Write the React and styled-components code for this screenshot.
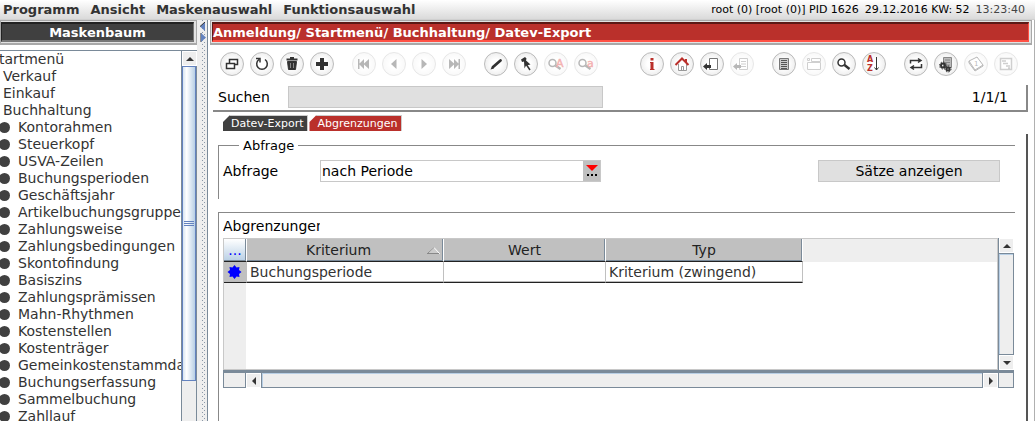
import React from 'react'
import styled, { createGlobalStyle } from 'styled-components';

const GlobalStyle = createGlobalStyle`
    * { box-sizing: border-box; }
    body {
        margin: 0;
        background-color: #fff;
        color: #000;
        font-family: "DejaVu Sans", Verdana, sans-serif;
        font-size: 14px;
        line-height: 17px;
        overflow: hidden;
    }
    button, input, select { font: inherit; color: inherit; margin: 0; padding: 0; border-radius: 0; }
    svg { display: block; }
`;

const AppContainer = styled.div`
    display: flex;
    flex-direction: column;
    height: 100vh;
`;

const MenuBar = styled.nav`
    display: flex;
    flex: none;
    align-items: center;
    height: 20px;
    padding: 0 10px 1px 3px;
    gap: 11px;
    background: linear-gradient(#fff, #dadada);
    border-bottom: 1px solid #d0d0d0;
`;

const MenuButton = styled.button`
    border: none;
    background: none;
    font-size: 13px;
    font-weight: bold;
    color: #333;
`;

const Status = styled.div`
    display: flex;
    margin-left: auto;
    gap: 6px;
    font-size: 11px;
    white-space: pre;
`;

const Clock = styled.span`
    color: #444;
`;

const Body = styled.div`
    display: flex;
    flex: 1;
    min-height: 0;
`;

const Sidebar = styled.aside`
    display: flex;
    flex-direction: column;
    flex: none;
    width: 197px;
`;

const PanelTitle = styled.h1`
    flex: none;
    height: 25px;
    margin: 0;
    padding: 1px 2px 1px ${props => props.$red ? "1px" : "0"};
    background-color: #e2e2e2;
    border: 1px solid #a8a8a8;
    border-width: 1px 1px 2px 1px;
    font-size: 13px;
    line-height: 18px;
    color: #fff;
`;

const PanelTitleInner = styled.div`
    height: 20px;
    border: 1px solid ${props => props.$red ? "#5c1815" : "#222"};
    border-top-width: 2px;
    border-right-color: ${props => props.$red ? "#ff5145" : "#777"};
    border-bottom: 2px solid ${props => props.$red ? "#ff5145" : "#777"};
    background-color: ${props => props.$red ? "#ba302b" : "#404040"};
    text-align: ${props => props.$red ? "left" : "center"};
    white-space: nowrap;
`;

const TreeBox = styled.div`
    display: flex;
    flex: 1;
    min-height: 0;
    margin-top: 5px;
    border-top: 1px solid #7a8a99;
`;

const Tree = styled.ul`
    flex: 1;
    min-width: 0;
    margin: 0;
    padding: 0;
    overflow: hidden;
    list-style: none;
    color: #333;
    white-space: nowrap;
`;

const TreeItem = styled.li`
    display: flex;
    align-items: center;
    height: 17px;
    gap: 8px;
    margin-left: ${props => props.$level === 0 ? "-10px" : props.$level === 1 ? "3px" : "-1px"};
`;

const Bullet = styled.span`
    flex: none;
    width: 11px;
    height: 11px;
    border-radius: 50%;
    background-color: #404040;
`;

const VScroll = styled.div`
    display: flex;
    flex-direction: column;
    flex: none;
    width: 16px;
    background-color: #eee;
    border: 1px solid #7a8a99;
    border-width: 0 1px;
`;

const HScroll = styled.div`
    display: flex;
    flex: 1;
    background-color: #eee;
    border: 1px solid #7a8a99;
    border-width: 1px 0;
`;

const ScrollButton = styled.button`
    display: flex;
    flex: none;
    align-items: center;
    justify-content: center;
    width: 15px;
    height: 15px;
    border: 1px solid #fff;
    background-color: #eee;
    color: #333;
`;

const ScrollTrack = styled.div`
    flex: 1;
    border: 1px solid #7a8a99;
    box-shadow: inset 1px 1px 0 #b8cfe5;
    border-width: ${props => props.$horizontal ? "0 1px" : "1px 0"};
`;

const Thumb = styled.div`
    display: flex;
    flex: none;
    align-items: center;
    justify-content: center;
    height: 315px;
    border: 1px solid #6382bf;
    background: linear-gradient(90deg, #d6e4f1, #fff 30%, #b8cfe5);
    color: #6382bf;
`;

const Splitter = styled.div`
    flex: none;
    width: 11px;
    padding: 2px 0 0 3px;
    background: linear-gradient(#8a98a8 1px, transparent 1px) 5px 0 / 1px 4px repeat-y,
        linear-gradient(#8a98a8 1px, transparent 1px) 7px 2px / 1px 4px repeat-y, #eee;
    border-right: 1px solid #7a8a99;
`;

const Main = styled.main`
    display: flex;
    flex-direction: column;
    flex: 1;
    min-width: 0;
    padding: 0 2px 0 2px;
    border-right: 1px solid #b0b0b0;
`;

const SearchPanel = styled.section`
    flex: none;
    margin: 0 4px 0 3px;
    border-bottom: 2px solid #888;
`;

const ToolBar = styled.div`
    display: flex;
    gap: 6px;
    padding: 7px 0 9px 7px;
`;

const ToolButton = styled.button`
    display: flex;
    flex: none;
    align-items: center;
    justify-content: center;
    width: 24px;
    height: 24px;
    margin-left: ${props => props.$gap}px;
    border: 1px solid #bbb;
    border-radius: 50%;
    background: radial-gradient(#fff 30%, #e4e4e4);
    color: #333;
    opacity: ${props => props.disabled ? 0.35 : 1};
`;

const SearchRow = styled.div`
    display: flex;
    align-items: center;
    height: 25px;
    padding: 0 18px 1px 5px;
    border-right: 2px solid #888;
`;

const SearchLabel = styled.label`
    width: 70px;
`;

const SearchInput = styled.input`
    width: 315px;
    height: 22px;
    border: 1px solid #c8c8c8;
    background-color: #e0e0e0;
`;

const Position = styled.output`
    margin-left: auto;
`;

const Tabs = styled.div`
    display: flex;
    flex: none;
    gap: 1px;
    padding: 3px 0 0 13px;
`;

const Tab = styled.button`
    height: 16px;
    padding: 0 4px 0 8px;
    border: none;
    border-top: 1px solid #ccc;
    border-right: 1px solid #ccc;
    background-color: ${props => props.$active ? "#ba302b" : "#404040"};
    color: #fff;
    font-size: 11px;
    line-height: 15px;
    clip-path: polygon(7px 0, 100% 0, 100% 100%, 0 100%, 0 7px);
`;

const TabPanel = styled.section`
    display: flex;
    flex-direction: column;
    flex: 1;
    min-height: 0;
    margin: 3px 4px 0 3px;
    padding: 3px 11px 0 5px;
    border-right: 2px solid #555;
`;

const Group = styled.fieldset`
    flex: none;
    min-width: 0;
    height: 62px;
    margin: 0;
    padding: 6px 15px 0 4px;
    border: solid #888;
    border-width: 1px 0 0 1px;
`;

const Legend = styled.legend`
    margin-left: 16px;
    padding: 0 4px;
    font-size: 13px;
    line-height: 17px;
`;

const FieldRow = styled.div`
    display: flex;
    align-items: center;
`;

const FieldLabel = styled.label`
    width: 97px;
`;

const Combo = styled.div`
    display: flex;
    width: 281px;
    height: 22px;
    border: 1px solid #c8c8c8;
`;

const Select = styled.select`
    flex: 1;
    padding: 0 1px;
    border: none;
    background-color: #fff;
    appearance: none;
`;

const ComboButton = styled.button`
    display: flex;
    align-items: center;
    justify-content: center;
    width: 17px;
    border: none;
    background-color: #c0c0c0;
`;

const ActionButton = styled.button`
    width: 182px;
    height: 22px;
    margin-left: auto;
    border: 1px solid #c8c8c8;
    background-color: #e0e0e0;
`;

const TableGroup = styled.div`
    flex: 1;
    margin-top: 13px;
    padding: 5px 1px 0 4px;
    border: solid #888;
    border-width: 1px 0 0 1px;
`;

const TableTitle = styled.h2`
    width: 97px;
    height: 20px;
    margin: 0;
    overflow: hidden;
    font-size: 14px;
    font-weight: normal;
`;

const GridBox = styled.div`
    display: flex;
    height: 134px;
    border-bottom: 2px solid #7a8a99;
`;

const GridView = styled.div`
    flex: 1;
    min-width: 0;
    border: 1px solid #c8c8c8;
    background: linear-gradient(90deg, #eee 22px, transparent 22px), linear-gradient(#eee 23px, #fff 23px);
`;

const Table = styled.table`
    width: 579px;
    table-layout: fixed;
    border-collapse: separate;
    border-spacing: 0;
    color: #333;
`;

const HeadCell = styled.th`
    width: ${props => props.$width}px;
    height: 23px;
    padding: 0 3px;
    border-right: 1px solid #fff;
    border-bottom: 1px solid #222;
    background-color: #c0c0c0;
    box-shadow: inset -1px -1px 0 #7a8a99;
    font-weight: normal;
    color: #222;
`;

const MenuHeadCell = styled(HeadCell)`
    background: linear-gradient(#fff, #b8cfe5);
    color: #00f;
`;

const HeadContent = styled.div`
    display: flex;
    align-items: center;
`;

const HeadText = styled.span`
    flex: 1;
`;

const Cell = styled.td`
    height: 21px;
    padding: 0 3px;
    border-right: 1px solid #c0c0c0;
    border-bottom: 1px solid #222;
    box-shadow: inset 0 -1px 0 #bbb;
    background-color: ${props => props.$marker ? "#c0c0c0" : "#fff"};
    white-space: nowrap;
`;

const GridFooter = styled.div`
    display: flex;
    height: 16px;
`;

const Corner = styled.div`
    flex: none;
    width: ${props => props.$width}px;
    border: 1px solid #7a8a99;
    background-color: #eee;
`;

const icons = {
    windows: <><path d="M5.500 3.500h8v5h-8z" fill="#fff" strokeWidth="1.500" /><path d="M2.500 7.500h8v5h-8z" fill="#fff" strokeWidth="1.500" /></>,
    reload: <path d="M5 3.500A5.300 5.300 0 1 0 11 3.500M2 2.500h4v4" strokeWidth="1.500" />,
    trash: <><path d="M3.500 5.500h9l-1 8h-7z" fill="currentColor" /><path d="M2.500 3.500h11M6 2h4" strokeWidth="2" /><path d="M6.500 7v5M9.500 7v5" stroke="#888" /></>,
    plus: <path d="M8 2v12M2 8h12" strokeWidth="4" />,
    first: <path d="M2 3v10h1.500V8.500L8 13V8.500l5 4.500V3L8 7.500V3L3.500 7.500V3z" fill="currentColor" stroke="none" />,
    prev: <path d="M10.500 3v10L5 8z" fill="currentColor" stroke="none" />,
    next: <path d="M5.500 3v10L11 8z" fill="currentColor" stroke="none" />,
    last: <path d="M14 3v10h-1.500V8.500L8 13V8.500L3 13V3l5 4.500V3l4.500 4.500V3z" fill="currentColor" stroke="none" />,
    pencil: <><path d="M5 11l7.500-6.500" strokeWidth="2.800" strokeLinecap="round" /><path d="M2.500 13.500l1.500-3 2 2z" fill="currentColor" stroke="none" /></>,
    pin: <><path d="M3 3.500L7 1l1.500 1.500L8 4.500l4.500 4L8 9.500l-1.500 3L6 5.500l-2 .5z" fill="currentColor" stroke="none" /><path d="M8 8l4 6" strokeWidth="1.500" /></>,
    search: <><circle cx="5.500" cy="6.500" r="3.500" strokeWidth="1.500" /><path d="M8.500 9l5 4" strokeWidth="2.500" /></>,
    searchUpper: <><circle cx="4.500" cy="7" r="3.500" strokeWidth="1.500" /><path d="M7.500 9.500l5 3.500" strokeWidth="2.500" /><text x="8" y="11" fontSize="11" fill="#d22" stroke="#d22" strokeWidth=".5">A</text></>,
    searchLower: <><circle cx="4.500" cy="7" r="3.500" strokeWidth="1.500" /><path d="M7.500 9.500l5 3.500" strokeWidth="2.500" /><text x="9" y="11" fontSize="11" fill="#d22" stroke="#d22" strokeWidth=".5">a</text></>,
    info: <g stroke="#ba302b"><path d="M8 2v2.500" strokeWidth="3" /><path d="M8 6v7.500" strokeWidth="3" /><path d="M6 6.500h2M6 13.500h4.500" /></g>,
    home: <><path d="M4.500 8v6.500h8V8M7.500 14.500v-4h2v4" stroke="#999" fill="#fff" /><path d="M1.500 9L8 2.500 14.500 9M12 3v3" stroke="#ba302b" strokeWidth="2" /></>,
    leave: <><path d="M5.500 2.500h8v11h-8z" fill="#fff" stroke="#777" /><path d="M-1 10.500l4-3.500v2h4v3H3v2z" fill="currentColor" stroke="none" /></>,
    leaveList: <><path d="M5.500 2.500h8v11h-8zM7 5.500h5M7 8h5M7 10.500h5" stroke="#777" /><path d="M-1 10.500l4-3.500v2h4v3H3v2z" fill="currentColor" stroke="none" /></>,
    list: <><path d="M3.500 2.500h9v11h-9z" fill="#ccc" stroke="#777" /><path d="M5 4.500h6M5 6.500h6M5 8.500h6M5 10.500h6M5 12.500h6" stroke="#555" /></>,
    form: <path d="M1.500 6.500h13v7h-13zM1.500 2.500h2v2h-2zM5.500 2.500h9v3h-9z" stroke="#777" />,
    sort: <><text x="1" y="6" fontSize="8" fontWeight="bold" fill="#ba302b" stroke="none">A</text><text x="1" y="15" fontSize="8" fontWeight="bold" fill="#ba302b" stroke="none">Z</text><path d="M10.500 1v13M8.500 11.500l2 2.500 2-2.500" /></>,
    swap: <path d="M2.500 7.500V4.500H12M10 2.500l3 2-3 2M13.500 8v3.500H4M6 9.500l-3 2 3 2" strokeWidth="1.500" />,
    gears: <><path d="M5.500 1.500h8v10h-8zM7 4h5M7 6.500h5M9 9h3" stroke="#888" fill="#bbb" /><circle cx="5" cy="9.500" r="2" strokeWidth="2" /><circle cx="5" cy="9.500" r="3.500" strokeDasharray="1.500 1.200" /><circle cx="10" cy="13" r="1.500" strokeWidth="2" /><circle cx="10" cy="13" r="3" strokeDasharray="1.500 1.200" /></>,
    calendar: <><path d="M1 5l8-4 6 8-8 5zM1 5v2l6 8 8-5V9" /><text x="6" y="10" fontSize="7" fill="#333" stroke="none">1</text></>,
    chart: <path d="M2.500 2.500h11v11h-11zM4 5h4M5 7.500h5M8 10h4M10 12h2" strokeWidth="1.500" stroke="#777" />,
}

const tools = [
    { icon: "windows", label: "Fenster" },
    { icon: "reload", label: "Neu laden" },
    { icon: "trash", label: "Löschen" },
    { icon: "plus", label: "Neu" },
    { icon: "first", label: "Erster", gap: 12, disabled: true },
    { icon: "prev", label: "Zurück", disabled: true },
    { icon: "next", label: "Weiter", disabled: true },
    { icon: "last", label: "Letzter", disabled: true },
    { icon: "pencil", label: "Bearbeiten", gap: 12 },
    { icon: "pin", label: "Anheften" },
    { icon: "searchUpper", label: "Suche A", disabled: true },
    { icon: "searchLower", label: "Suche a", disabled: true },
    { icon: "info", label: "Info", gap: 36 },
    { icon: "home", label: "Startmenü" },
    { icon: "leave", label: "Verlassen" },
    { icon: "leaveList", label: "Liste verlassen", disabled: true },
    { icon: "list", label: "Liste", gap: 12 },
    { icon: "form", label: "Formular", disabled: true },
    { icon: "search", label: "Suchen" },
    { icon: "sort", label: "Sortieren" },
    { icon: "swap", label: "Wechseln", gap: 12 },
    { icon: "gears", label: "Einstellungen" },
    { icon: "calendar", label: "Kalender", disabled: true },
    { icon: "chart", label: "Diagramm", disabled: true },
]

const menus = ["Programm", "Ansicht", "Maskenauswahl", "Funktionsauswahl"]

const folders = ["Verkauf", "Einkauf", "Buchhaltung"]

const masks = [
    "Kontorahmen", "Steuerkopf", "USVA-Zeilen", "Buchungsperioden", "Geschäftsjahr",
    "Artikelbuchungsgruppen", "Zahlungsweise", "Zahlungsbedingungen", "Skontofindung",
    "Basiszins", "Zahlungsprämissen", "Mahn-Rhythmen", "Kostenstellen", "Kostenträger",
    "Gemeinkostenstammdaten", "Buchungserfassung", "Sammelbuchung", "Zahllauf",
]

const arrows = {
    up: "M0 6h8L4 2z",
    down: "M0 2h8L4 6z",
    left: "M6 0v8L2 4z",
    right: "M2 0v8l4-4z",
}

const Arrow = ({ dir }) => (
    <svg width="8" height="8" viewBox="0 0 8 8"><path d={arrows[dir]} fill="currentColor" /></svg>
)

const MaskTree = () => (
    <Sidebar>
        <PanelTitle><PanelTitleInner>Maskenbaum</PanelTitleInner></PanelTitle>
        <TreeBox>
            <Tree>
                <TreeItem $level={0}>Startmenü</TreeItem>
                {folders.map(name => <TreeItem key={name} $level={1}>{name}</TreeItem>)}
                {masks.map(name => <TreeItem key={name} $level={2}><Bullet />{name}</TreeItem>)}
            </Tree>
            <VScroll>
                <ScrollButton aria-label="Nach oben"><Arrow dir="up" /></ScrollButton>
                <Thumb>
                    <svg width="10" height="6" viewBox="0 0 10 6"><path d="M0 .5h10M0 2.500h10M0 4.500h10" stroke="currentColor" /></svg>
                </Thumb>
            </VScroll>
        </TreeBox>
    </Sidebar>
)

class App extends React.Component {
    state = {
        search: "",
        query: "nach Periode",
        tab: "Abgrenzungen",
    }

    onChange = event => {
        const { name, value } = event.target;
        this.setState({ [name]: value })
    }

    render() {
        const { search, query, tab } = this.state;
        return (
            <AppContainer>
                <GlobalStyle />
                <MenuBar>
                    {menus.map(name => <MenuButton key={name}>{name}</MenuButton>)}
                    <Status>
                        <span>root (0) [root (0)] PID 1626</span>
                        <span>29.12.2016 KW: 52</span>
                        <Clock>13:23:40</Clock>
                    </Status>
                </MenuBar>
                <Body>
                    <MaskTree />
                    <Splitter>
                        <svg width="7" height="21" viewBox="0 0 7 21">
                            <path d="M5 0v9L0 4.500z" fill="#6382bf" />
                            <path d="M5 0L0 4.500M1 11v9" stroke="#333" />
                            <path d="M1 11v9l5-4.500z" fill="#6382bf" />
                        </svg>
                    </Splitter>
                    <Main>
                        <PanelTitle $red>
                            <PanelTitleInner $red>Anmeldung/ Startmenü/ Buchhaltung/ Datev-Export</PanelTitleInner>
                        </PanelTitle>
                        <SearchPanel>
                            <ToolBar>
                                {tools.map(({ icon, label, gap, disabled }) => (
                                    <ToolButton key={icon} aria-label={label} $gap={gap || 0} disabled={disabled}>
                                        <svg width="16" height="16" viewBox="0 0 16 16" fill="none" stroke="currentColor" overflow="visible">{icons[icon]}</svg>
                                    </ToolButton>
                                ))}
                            </ToolBar>
                            <SearchRow>
                                <SearchLabel htmlFor="search">Suchen</SearchLabel>
                                <SearchInput id="search" name="search" value={search} onChange={this.onChange} />
                                <Position>1/1/1</Position>
                            </SearchRow>
                        </SearchPanel>
                        <Tabs>
                            {["Datev-Export", "Abgrenzungen"].map(name => (
                                <Tab key={name} $active={name === tab} onClick={() => this.setState({ tab: name })}>{name}</Tab>
                            ))}
                        </Tabs>
                        <TabPanel>
                            <Group>
                                <Legend>Abfrage</Legend>
                                <FieldRow>
                                    <FieldLabel htmlFor="query">Abfrage</FieldLabel>
                                    <Combo>
                                        <Select id="query" name="query" value={query} onChange={this.onChange}>
                                            <option>nach Periode</option>
                                        </Select>
                                        <ComboButton aria-label="Auswahl">
                                            <svg width="12" height="12" viewBox="0 0 12 12">
                                                <path d="M0 0h12L6 6z" fill="#f00" />
                                                <path d="M1 9h2v2H1zM5 9h2v2H5zM9 9h2v2H9z" />
                                            </svg>
                                        </ComboButton>
                                    </Combo>
                                    <ActionButton>Sätze anzeigen</ActionButton>
                                </FieldRow>
                            </Group>
                            <TableGroup>
                                <TableTitle>Abgrenzungen</TableTitle>
                                <GridBox>
                                    <GridView>
                                        <Table>
                                            <thead>
                                                <tr>
                                                    <MenuHeadCell $width={23}>...</MenuHeadCell>
                                                    <HeadCell $width={197}>
                                                        <HeadContent>
                                                            <HeadText>Kriterium</HeadText>
                                                            <svg width="13" height="7" viewBox="0 0 13 7">
                                                                <path d="M.5 6.500L7 .5l5.500 6z" fill="#ccc" stroke="#fff" />
                                                                <path d="M0 6.500h12M.5 6.500L7 .5" stroke="#888" />
                                                            </svg>
                                                        </HeadContent>
                                                    </HeadCell>
                                                    <HeadCell $width={162}>Wert</HeadCell>
                                                    <HeadCell $width={197}>Typ</HeadCell>
                                                </tr>
                                            </thead>
                                            <tbody>
                                                <tr>
                                                    <Cell $marker>
                                                        <svg width="15" height="14" viewBox="0 0 15 14">
                                                            <path d="M7.500 0l2 2.500 3-.5-.5 3 2.500 2-2.500 2 .5 3-3-.5-2 2.500-2-2.500-3 .5.5-3L.5 7l2.500-2-.5-3 3 .5z" fill="#00f" />
                                                        </svg>
                                                    </Cell>
                                                    <Cell>Buchungsperiode</Cell>
                                                    <Cell />
                                                    <Cell>Kriterium (zwingend)</Cell>
                                                </tr>
                                            </tbody>
                                        </Table>
                                    </GridView>
                                    <VScroll>
                                        <ScrollButton aria-label="Zeile hoch"><Arrow dir="up" /></ScrollButton>
                                        <ScrollTrack />
                                        <ScrollButton aria-label="Zeile runter"><Arrow dir="down" /></ScrollButton>
                                    </VScroll>
                                </GridBox>
                                <GridFooter>
                                    <Corner $width={23} />
                                    <HScroll>
                                        <ScrollButton aria-label="Nach links"><Arrow dir="left" /></ScrollButton>
                                        <ScrollTrack $horizontal />
                                        <ScrollButton aria-label="Nach rechts"><Arrow dir="right" /></ScrollButton>
                                    </HScroll>
                                    <Corner $width={16} />
                                </GridFooter>
                            </TableGroup>
                        </TabPanel>
                    </Main>
                </Body>
            </AppContainer>
        );
    }
}

export default App;
